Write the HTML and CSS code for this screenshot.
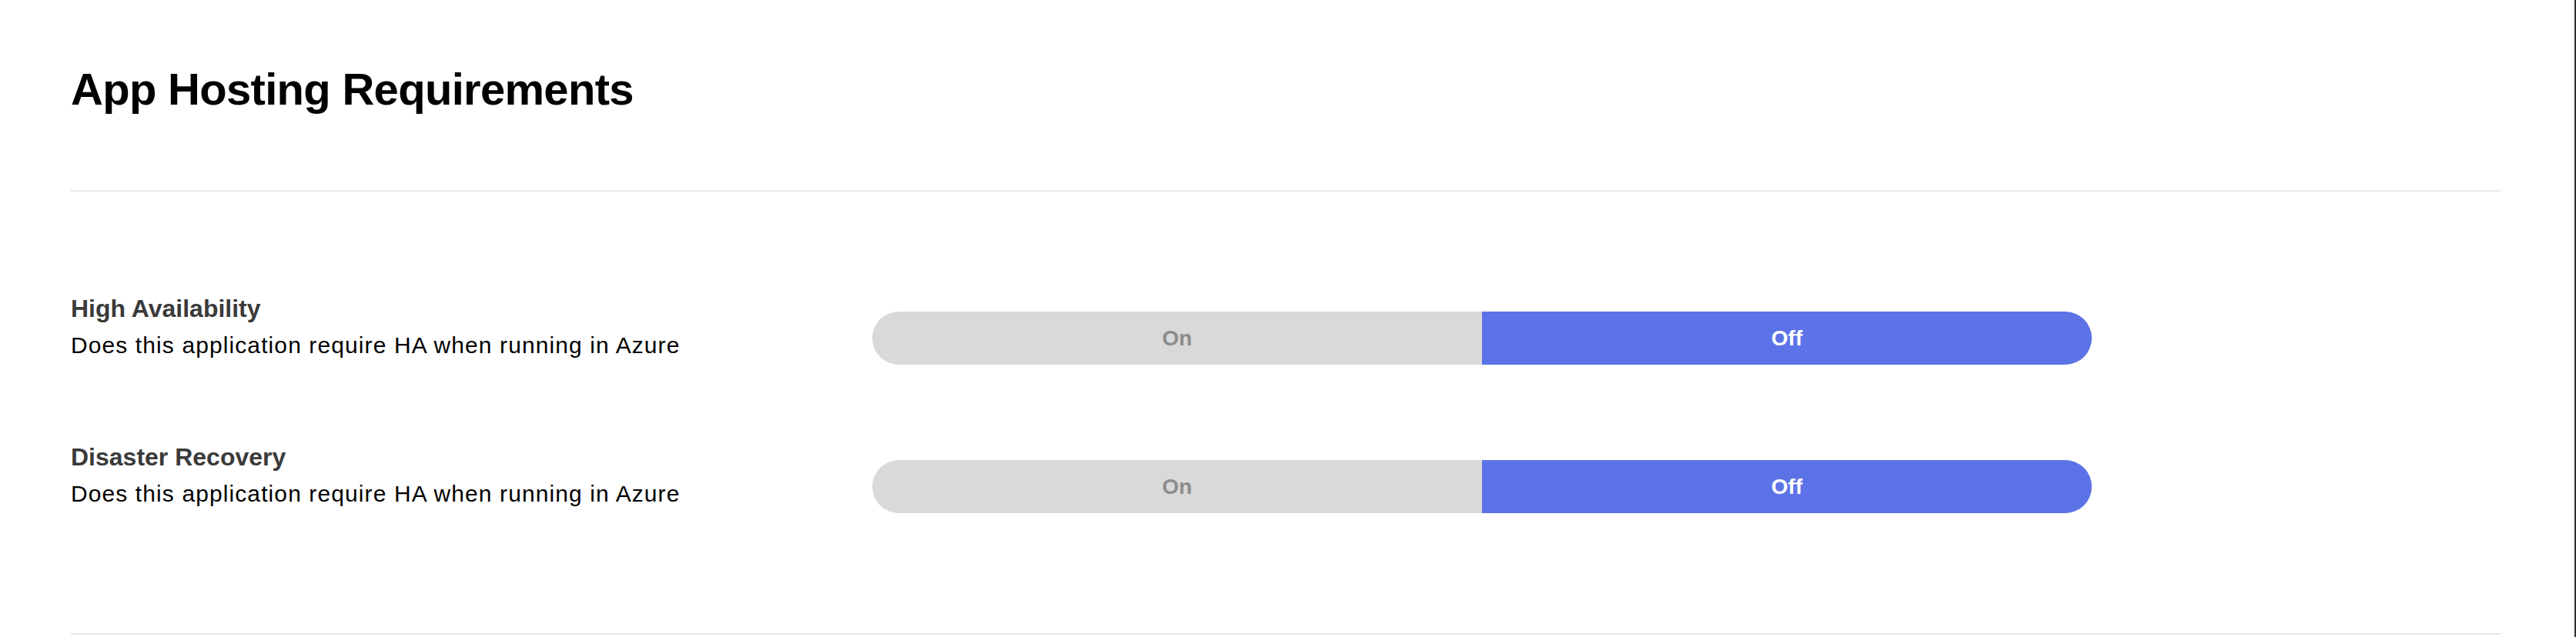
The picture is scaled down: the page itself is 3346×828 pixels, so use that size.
FILE: index.html
```html
<!DOCTYPE html>
<html lang="en">
<head>
    <meta charset="UTF-8" />
    <title>App Hosting Requirements</title>
    <link rel="stylesheet" href="styles.css">
</head>
<body>
    <div class="page">
        <h1 class="title">App Hosting Requirements</h1>
        <div class="rule"></div>

        <div class="options">
            <div class="row">
                <div class="info">
                    <div class="label">High Availability</div>
                    <div class="desc">Does this application require HA when running in Azure</div>
                </div>
                <div class="toggle">
                    <span class="seg">On</span>
                    <span class="seg active">Off</span>
                </div>
            </div>
            <div class="row">
                <div class="info">
                    <div class="label">Disaster Recovery</div>
                    <div class="desc">Does this application require HA when running in Azure</div>
                </div>
                <div class="toggle">
                    <span class="seg">On</span>
                    <span class="seg active">Off</span>
                </div>
            </div>
        </div>
        <div class="rule"></div>
    </div>
</body>
</html>
```

FILE: styles.css
```css
*{
    margin: 0;
    padding: 0;
    box-sizing: border-box;
}
html,body{
    width: 100%;
    height: 100%;
    background: #fff;
}
body{
    font-family: "Liberation Sans", Arial, sans-serif;
    color: #000;
    border-right: 2px solid #2e2e2e;
}
.page{
    padding: 80px 96px 0 92px;
}
.title{
    font-size: 58px;
    line-height: 72px;
    font-weight: bold;
    letter-spacing: -0.7px;
    height: 167px;
}
.rule{
    height: 2px;
    background: #e5e7eb;
}
.options{
    padding: 132px 0 156px;
    display: flex;
    flex-direction: column;
    gap: 100px;
}
.row{
    display: flex;
    align-items: flex-start;
}
.info{
    width: 1041px;
}
.label{
    font-size: 32px;
    line-height: 40px;
    font-weight: bold;
    color: #3a3a3a;
}
.desc{
    margin-top: 10px;
    font-size: 30px;
    line-height: 36px;
    letter-spacing: 1.1px;
}
.toggle{
    margin-top: 24px;
    width: 1584px;
    height: 69px;
    display: flex;
    border-radius: 35px;
    overflow: hidden;
    background: #d9d9d9;
}
.seg{
    flex: 1;
    display: flex;
    align-items: center;
    justify-content: center;
    font-size: 28px;
    font-weight: bold;
    color: #8c8c8c;
}
.seg.active{
    background: #5c73e7;
    color: #fff;
}
```
